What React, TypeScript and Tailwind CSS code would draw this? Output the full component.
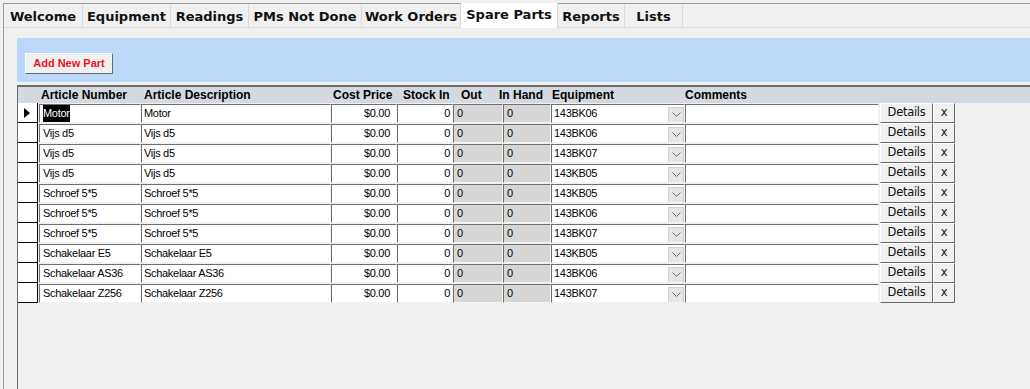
import React from 'react';

const tabs = [
  { name: 'Welcome', w: 'w-[79px]' },
  { name: 'Equipment', w: 'w-[88px]' },
  { name: 'Readings', w: 'w-[78px]' },
  { name: 'PMs Not Done', w: 'w-[113px]' },
  { name: 'Work Orders', w: 'w-[99px]' },
  { name: 'Spare Parts', w: 'w-[97px]', active: true },
  { name: 'Reports', w: 'w-[67px]' },
  { name: 'Lists', w: 'w-[58px]' },
];

const parts = [
  ['Motor', 'Motor', '143BK06'],
  ['Vijs d5', 'Vijs d5', '143BK06'],
  ['Vijs d5', 'Vijs d5', '143BK07'],
  ['Vijs d5', 'Vijs d5', '143KB05'],
  ['Schroef 5*5', 'Schroef 5*5', '143KB05'],
  ['Schroef 5*5', 'Schroef 5*5', '143BK06'],
  ['Schroef 5*5', 'Schroef 5*5', '143BK07'],
  ['Schakelaar E5', 'Schakelaar E5', '143KB05'],
  ['Schakelaar AS36', 'Schakelaar AS36', '143BK06'],
  ['Schakelaar Z256', 'Schakelaar Z256', '143BK07'],
];

const cell =
  'h-[19px] mt-px flex items-center border-t border-l border-[#6f6f6f] border-r-[#f4f4f4] border-b-[#f4f4f4] border-r border-b overflow-hidden whitespace-nowrap';

function Chevron() {
  return (
    <svg width="9" height="5" viewBox="0 0 9 5">
      <path d="M0.5 0.5 L4.5 4.5 L8.5 0.5" fill="none" stroke="#6a6a6a" strokeWidth="1" />
    </svg>
  );
}

function RaisedBtn({ w, children }: { w: string; children: React.ReactNode }) {
  return (
    <div
      className={`${w} h-[20px] flex items-center justify-center bg-[#f0f0f0] border-t border-l border-white border-r border-b border-r-[#6a6a6a] border-b-[#6a6a6a] text-[11.5px] text-[#111] font-['DejaVu_Sans',sans-serif]`}
    >
      {children}
    </div>
  );
}

function Row({ p, i }: { p: string[]; i: number }) {
  return (
    <div className="flex h-[20px]">
      <div className="w-[20px] h-[20px] bg-white border-r border-b border-black flex items-center pl-[6px]">
        {i === 0 && (
          <svg width="6" height="10" viewBox="0 0 6 10">
            <path d="M0 0 L6 5 L0 10 Z" fill="#000" />
          </svg>
        )}
      </div>
      <div className={`${cell} w-[102px] ml-px bg-white pl-[3px]`}>
        {i === 0 ? <span className="bg-black text-white">{p[0]}</span> : p[0]}
      </div>
      <div className={`${cell} w-[190px] bg-white pl-[2px]`}>{p[1]}</div>
      <div className={`${cell} w-[66px] bg-white justify-end pr-[6px]`}>$0.00</div>
      <div className={`${cell} w-[56px] bg-white justify-end pr-[2px]`}>0</div>
      <div className={`${cell} w-[50px] bg-[#d6d6d6] pl-[3px]`}>0</div>
      <div className={`${cell} w-[48px] bg-[#d6d6d6] pl-[3px]`}>0</div>
      <div className={`${cell} w-[134px] bg-white pl-[2px] justify-between`}>
        <span>{p[2]}</span>
        <div className="w-[16px] h-[16px] mt-[2px] bg-[#e6e6e6] border border-[#cfcfcf] flex items-center justify-center">
          <Chevron />
        </div>
      </div>
      <div className={`${cell} w-[194px] bg-white`}></div>
      <div className="ml-px flex">
        <RaisedBtn w="w-[53px]">Details</RaisedBtn>
        <RaisedBtn w="w-[22px]">x</RaisedBtn>
      </div>
    </div>
  );
}

export default function App() {
  return (
    <div className="w-[1030px] h-[389px] bg-[#f0f0f0] overflow-hidden pt-[3px] pl-[3px]">
      <div className="h-full border-l border-t border-[#9a9a9a] flex flex-col">
        {/* tab strip */}
        <div className="h-[24px] flex border-b border-[#d9d9d9] font-['DejaVu_Sans',sans-serif] font-bold text-[13px] text-[#111]">
          {tabs.map((t) => (
            <div
              key={t.name}
              className={`${t.w} flex items-center justify-center border-r border-[#d9d9d9] ${
                t.active ? 'bg-white -mt-px h-[25px] pb-px' : 'bg-[#f0f0f0] pt-[3px]'
              }`}
            >
              {t.name}
            </div>
          ))}
        </div>

        <div className="flex-1 flex flex-col pl-[13px] pt-[10px]">
          {/* toolbar */}
          <div className="h-[44px] bg-[#bad9fa] pl-[8px] pt-[15px]">
            <div className="w-[88px] h-[21px] flex items-center justify-center bg-[#f0f0f0] border-t border-l border-white border-r border-b border-r-[#6a6a6a] border-b-[#6a6a6a] text-[11px] font-bold text-[#e5141e] font-['Liberation_Sans',sans-serif]">
              Add New Part
            </div>
          </div>

          {/* grid */}
          <div className="flex-1 mt-[3px] border-t-2 border-l border-[#6b6b6b] bg-[#f0f0f0] font-['Liberation_Sans',sans-serif] text-[11px] tracking-[-0.3px] text-black">
            <div className="h-[16px] flex bg-[#d4d8df] font-bold text-[12px] tracking-normal leading-[16px] text-black">
              <div className="w-[20px]"></div>
              <div className="w-[103px] pl-[3px]">Article Number</div>
              <div className="w-[190px] pl-[3px]">Article Description</div>
              <div className="w-[70px] pl-[2px]">Cost Price</div>
              <div className="w-[58px] pl-[2px]">Stock In</div>
              <div className="w-[39px] pl-[2px]">Out</div>
              <div className="w-[53px] pl-[1px]">In Hand</div>
              <div className="w-[133px] pl-[1px]">Equipment</div>
              <div className="pl-[1px]">Comments</div>
            </div>
            {parts.map((p, i) => (
              <Row key={i} p={p} i={i} />
            ))}
          </div>
        </div>
      </div>
    </div>
  );
}
